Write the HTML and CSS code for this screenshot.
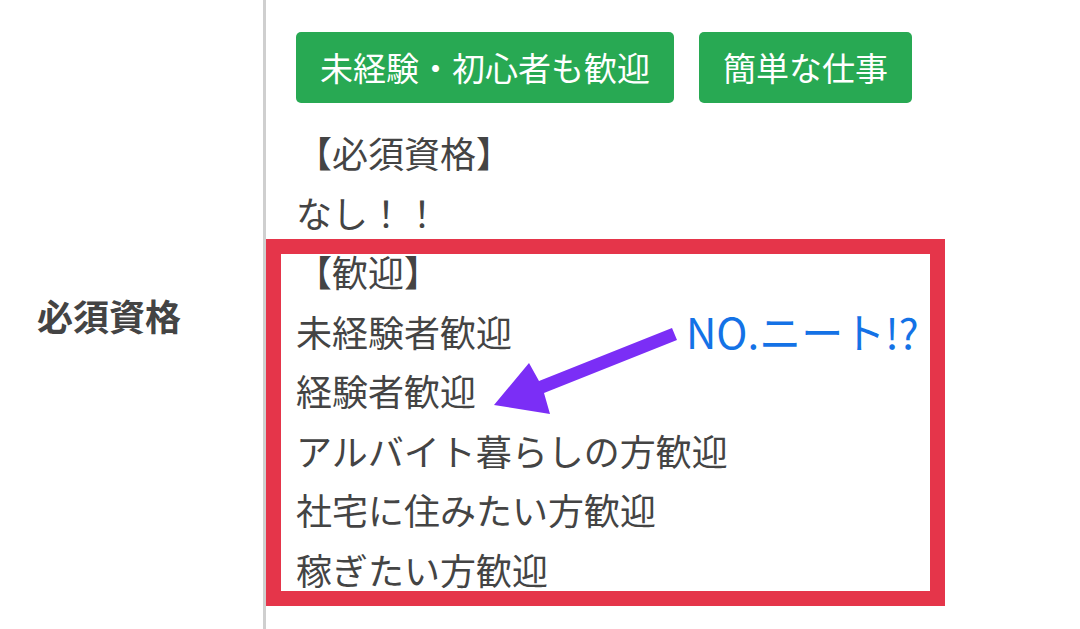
FILE: index.html
```html
<!DOCTYPE html>
<html lang="ja">
  <head>
    <meta charset="UTF-8">
    <meta name="viewport" content="width=device-width, initial-scale=1.0">
    <title>必須資格</title>
    <link rel="stylesheet" href="styles.css">
  </head>
  <body>
    <div class="row">
      <div class="label">必須資格</div>
      <div class="detail">
        <div class="tags">
          <span class="tag">未経験・初心者も歓迎</span>
          <span class="tag">簡単な仕事</span>
        </div>
        <p class="text">
          【必須資格】<br>
          なし！！<br>
          【歓迎】<br>
          未経験者歓迎<br>
          経験者歓迎<br>
          アルバイト暮らしの方歓迎<br>
          社宅に住みたい方歓迎<br>
          稼ぎたい方歓迎
        </p>
        <!-- annotation layer -->
        <div class="mark"></div>
        <svg class="arrow" viewBox="490 320 200 100" width="200" height="100">
          <polygon points="675,328 680,340 547,393 553,414 497,405 532,363 542,381" fill="#7b2ef6"/>
        </svg>
        <span class="note">NO.ニート!?</span>
      </div>
    </div>
  </body>
</html>
```

FILE: styles.css
```css
body,
html {
  margin: 0;
  background: #fff;
  font-family: 'Noto Sans CJK JP', 'Noto Sans', sans-serif;
  color: #444;
}

.row {
  display: flex;
  align-items: center;
  width: 100%;
  height: 629px;
  overflow: hidden;
}

.label {
  width: 226px;
  padding-left: 37px;
  font-size: 36px;
  font-weight: bold;
  color: #444;
}

.detail {
  position: relative;
  flex: 1;
  align-self: stretch;
  border-left: 3px solid #cfcfcf;
  padding: 32px 0 0 30px;
}

.tags {
  display: flex;
  gap: 25px;
}

.tag {
  display: inline-block;
  height: 71px;
  line-height: 71px;
  padding: 0 24px;
  border-radius: 5px;
  background: #28a953;
  color: #fff;
  font-size: 33px;
}

.text {
  margin: 20px 0 0;
  font-size: 36px;
  line-height: 59.5px;
  color: #444;
}

.mark {
  position: absolute;
  left: 0;
  top: 239px;
  width: 679px;
  height: 367px;
  box-sizing: border-box;
  border: 15px solid #e5354a;
}

.arrow {
  position: absolute;
  left: 221px;
  top: 320px;
}

.note {
  position: absolute;
  left: 420px;
  top: 303px;
  font-size: 42px;
  line-height: 56px;
  color: #1472e6;
  white-space: nowrap;
}
```
